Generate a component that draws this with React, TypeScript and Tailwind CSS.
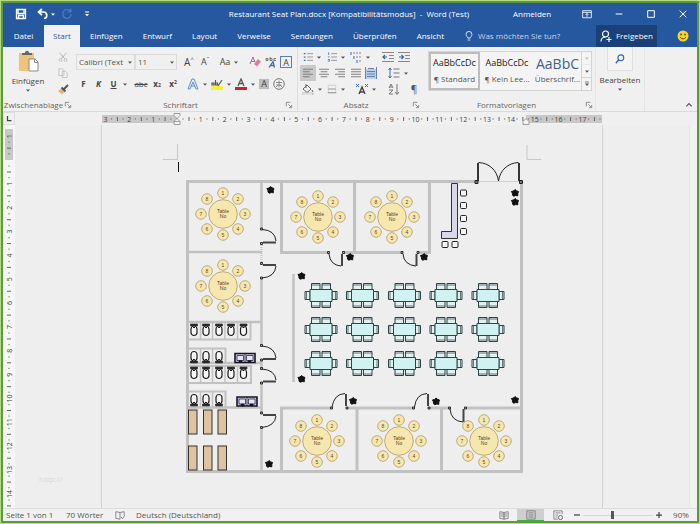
import type { ReactNode } from "react";

const tabs = ["Einfügen", "Entwurf", "Layout", "Verweise", "Sendungen", "Überprüfen", "Ansicht"];

const roundTables = [
  [223, 214],
  [223, 286],
  [318, 217],
  [392, 217],
  [317, 441],
  [399, 441],
  [484, 441],
];

const seats = [
  [0, -21],
  [15, -15],
  [22, 0],
  [15, 15],
  [0, 21],
  [-16, 15],
  [-22, 0],
  [-16, -15],
];

const plants = [
  [270.5, 190],
  [350, 257],
  [424, 257],
  [301.5, 276],
  [301.5, 379],
  [269, 464],
  [515, 193],
  [515, 202],
  [515, 400],
  [353, 401],
  [436, 401.5],
];

const doors = [
  { posts: [261.5, 229, 261.5, 243.5], leaf: "M263 242.5H276", arc: "M262 229.5Q275 230 276 241" },
  { posts: [261.5, 263.5, 261.5, 278], leaf: "M263 265H276", arc: "M262 278Q275 277 276 266" },
  { posts: [261.5, 345.5, 261.5, 360], leaf: "M263 359H276", arc: "M262 346Q275 347 276 358" },
  { posts: [261.5, 368.5, 261.5, 383], leaf: "M263 381.5H276", arc: "M262 369Q275 370 276 380" },
  { posts: [261.5, 413, 261.5, 427.5], leaf: "M263 415H276", arc: "M262 427.5Q275 426 276 416" },
  { posts: [328.5, 252.5, 343.5, 252.5], leaf: "M342 254V266", arc: "M329 254Q330 265 341 266" },
  { posts: [402, 252.5, 418, 252.5], leaf: "M416.5 254V266", arc: "M403 254Q404 265 416 266" },
  { posts: [331.5, 408, 347, 408], leaf: "M346 406V394", arc: "M332 407Q334 394 345 393.5" },
  { posts: [413.5, 408, 429, 408], leaf: "M428 406V394", arc: "M414.5 407Q416 394 427 393.5" },
  { posts: [449.5, 408, 465.5, 408], leaf: "M463.5 409V422", arc: "M450 409Q451 421 463 422" },
];

const stools = [
  [463.5, 193],
  [463.5, 205.5],
  [463.5, 218.5],
  [463.5, 231.5],
  [445, 244.5],
  [455, 244.5],
];

function Caret() {
  return (
    <svg viewBox="0 0 4 3" className="h-[3px] w-1 shrink-0 fill-[#555]" aria-hidden="true">
      <path d="M0 .5h4L2 2.7z" />
    </svg>
  );
}

function Icon({ children, className = "size-3" }: { children: ReactNode; className?: string }) {
  return (
    <svg viewBox="0 0 12 12" fill="none" className={`shrink-0 ${className}`} aria-hidden="true">
      {children}
    </svg>
  );
}

function Tool({ label, className, children }: { label: string; className: string; children: ReactNode }) {
  return (
    <button aria-label={label} className={`flex shrink-0 items-center justify-center ${className}`}>
      {children}
    </button>
  );
}

function GroupLabel({ children }: { children: ReactNode }) {
  return (
    <div className="flex h-3 items-center text-[#666]">
      <span className="flex-1 text-center">{children}</span>
      <Icon className="size-2">
        <path d="M2 8V2h6M5 5l4 4M10 6v4H6" stroke="#777" strokeWidth="1.2" />
      </Icon>
    </div>
  );
}

function TitleBar() {
  return (
    <div className="flex h-[22px] items-center bg-[#2658a0] text-white">
      <div className="flex w-[198px] items-center pl-3">
        <Tool label="Speichern" className="w-3">
          <Icon>
            <path d="M1.5 1.5h9v9h-9zM3 1.5v4h6v-4M3.5 10.5v-3h5v3" stroke="#fff" strokeWidth="1.3" />
          </Icon>
        </Tool>
        <Tool label="Rückgängig" className="ml-2.5 w-3">
          <Icon>
            <path d="M5 1L1.5 4 5 7.2M2 4h4.5c4 0 4.5 6 .5 6.5" stroke="#fff" strokeWidth="1.7" />
          </Icon>
        </Tool>
        <Tool label="Rückgängig Liste" className="w-2">
          <svg viewBox="0 0 4 3" className="h-[3px] w-1 fill-white"><path d="M0 .5h4L2 2.7z" /></svg>
        </Tool>
        <Tool label="Wiederholen" className="ml-1 w-3">
          <Icon>
            <path d="M9.5 3.5A4.3 4.3 0 1 0 10.300 6M9.8.8v3H6.8" stroke="#4f79b8" strokeWidth="1.3" />
          </Icon>
        </Tool>
        <Tool label="Symbolleiste anpassen" className="ml-2 w-3">
          <Icon className="size-2">
            <path d="M3 3h6" stroke="#fff" strokeWidth="1.5" />
            <path d="M3 6h6L6 9.5z" fill="#fff" />
          </Icon>
        </Tool>
      </div>
      <h1 className="flex-1 text-center whitespace-nowrap">
        Restaurant Seat Plan.docx [Kompatibilitätsmodus] &nbsp;-&nbsp; Word (Test)
      </h1>
      <div className="flex w-[200px] items-center justify-between pr-2">
        <button className="ml-4">Anmelden</button>
        <div className="flex gap-5">
          <Tool label="Menüband-Anzeigeoptionen" className="w-3">
            <Icon className="size-2.5">
              <path d="M.8 2h10.400v8.500H.8zM.8 4h10.400M6 9.5V5.5M4.300 7L6 5.300 7.700 7" stroke="#fff" />
            </Icon>
          </Tool>
          <Tool label="Minimieren" className="w-3">
            <Icon className="size-2"><path d="M1 6h10" stroke="#fff" strokeWidth="1.5" /></Icon>
          </Tool>
          <Tool label="Maximieren" className="w-3">
            <Icon className="size-2"><path d="M1 1h10v10H1z" stroke="#fff" strokeWidth="1.5" /></Icon>
          </Tool>
          <Tool label="Schließen" className="w-3">
            <Icon className="size-2"><path d="M1 1l10 10M11 1L1 11" stroke="#fff" strokeWidth="1.5" /></Icon>
          </Tool>
        </div>
      </div>
    </div>
  );
}

function TabBar() {
  return (
    <nav className="flex h-[22px] items-center bg-[#2658a0] text-white">
      <button className="w-[41px]">Datei</button>
      <button className="h-full w-9 bg-[#f1f1f1] text-[#2a579a]">Start</button>
      <div className="ml-2.5 flex gap-5">
        {tabs.map((tab) => (
          <button key={tab}>{tab}</button>
        ))}
      </div>
      <label className="ml-5 flex flex-1 items-center">
        <Icon className="size-2.5">
          <path d="M4.5 8.5C4.5 7 2.5 6.5 2.5 4a3.5 3.5 0 0 1 7 0c0 2.5-2 3-2 4.500zM4.5 10.800h3" stroke="#d5e1f2" strokeWidth="1.2" />
        </Icon>
        <input
          aria-label="Was möchten Sie tun?"
          placeholder="Was möchten Sie tun?"
          className="ml-1 w-24 bg-transparent outline-none placeholder:text-[#c5d5ec]"
        />
      </label>
      <button className="flex h-full w-[61px] items-center justify-center gap-1 bg-[#1a4078]">
        <Icon className="size-3">
          <circle cx="5.5" cy="4" r="3" stroke="#fff" strokeWidth="1.2" />
          <path d="M1 11.5c0-3 2-4.500 4.5-4.500M6.5 9.5h5M9 7v5" stroke="#fff" strokeWidth="1.2" />
        </Icon>
        Freigeben
      </button>
      <Tool label="Feedback" className="mr-2 ml-5 w-3">
        <Icon>
          <circle cx="6" cy="6" r="5.5" fill="#fbd324" />
          <circle cx="4" cy="4.5" r=".9" fill="#5b4a10" />
          <circle cx="8" cy="4.5" r=".9" fill="#5b4a10" />
          <path d="M3 7.2Q6 10.500 9 7.2" stroke="#5b4a10" />
        </Icon>
      </Tool>
    </nav>
  );
}

function Clipboard() {
  return (
    <section className="flex w-[73px] flex-col">
      <div className="flex flex-1 gap-1 pt-0.5">
        <button className="flex w-[50px] flex-col items-center pt-px">
          <svg viewBox="0 0 22 22" className="size-[22px]" aria-hidden="true">
            <path d="M2 3h15v18H2z" fill="#efc47a" />
            <path d="M5 5V3h3c0-3 4-3 4 0h3v2z" fill="#666" />
            <path d="M12 9h6l3 3v9h-9z" fill="#fff" stroke="#8a8a8a" />
            <path d="M17.5 9v3.5H21" fill="none" stroke="#8a8a8a" />
          </svg>
          <span className="mt-1">Einfügen</span>
          <span className="flex h-2 items-center"><Caret /></span>
        </button>
        <div className="flex flex-col gap-1 pt-0.5">
          <Tool label="Ausschneiden" className="h-3 w-3">
            <Icon className="size-2.5">
              <path d="M2 1l6 7M10 1L4 8" stroke="#aaa" />
              <circle cx="3" cy="9.5" r="1.7" stroke="#bbb" />
              <circle cx="9" cy="9.5" r="1.7" stroke="#bbb" />
            </Icon>
          </Tool>
          <Tool label="Kopieren" className="h-3 w-3">
            <Icon className="size-2.5"><path d="M1 1h4l2 2v6H1zM5 4h4l2 2v5.500H5z" stroke="#bdbdbd" /></Icon>
          </Tool>
          <Tool label="Format übertragen" className="h-3 w-3">
            <Icon>
              <path d="M1 8l4-3 3 3-3 3.500z" fill="#eab676" />
              <path d="M4.5 4.5l4 4M7 6l4-4" stroke="#555" strokeWidth="2" />
            </Icon>
          </Tool>
        </div>
      </div>
      <div className="pr-1">
        <GroupLabel>Zwischenablage</GroupLabel>
      </div>
    </section>
  );
}

function FontGroup() {
  return (
    <section className="flex w-[222px] flex-col border-r border-[#dedede] pr-1">
      <div className="flex-1 pt-1.5">
        <div className="flex h-[18px] items-center">
          <label className="flex h-4 w-[59px] items-center border border-[#dcdcdc] px-0.5 text-[#555]">
            <select aria-label="Schriftart" className="min-w-0 flex-1 appearance-none bg-transparent outline-none">
              <option>Calibri (Text</option>
            </select>
            <Caret />
          </label>
          <label className="flex h-4 w-[42px] items-center border border-[#dcdcdc] px-0.5 text-[#555]">
            <select aria-label="Schriftgrad" className="min-w-0 flex-1 appearance-none bg-transparent outline-none">
              <option>11</option>
            </select>
            <Caret />
          </label>
          <Tool label="Vergrößern" className="ml-1 w-4 text-[10px]">A<sup className="text-[6px]">^</sup></Tool>
          <Tool label="Verkleinern" className="w-4 text-[9px]">A<sup className="text-[6px]">ˇ</sup></Tool>
          <Tool label="Groß/Klein" className="ml-1 w-6 gap-1 text-[9px]">Aa<Caret /></Tool>
          <Tool label="Formatierung löschen" className="ml-1.5 w-4">
            <Icon>
              <path d="M5 8l4-5 3 2.500-4 5z" fill="#df7c9a" />
              <path d="M1 8L4 1l2 5M2.5 5.5h3" stroke="#a56a90" />
            </Icon>
          </Tool>
          <Tool label="Phonetische Zeichen" className="w-4">
            <Icon>
              <path d="M1 2.5h2v2H1zM5 1v3.500h2v-2H5M11 2.5H9v2h2" stroke="#666" strokeWidth=".9" />
              <path d="M4 11.5L8 5.5l1.500 6M5.5 9.5h3.500" stroke="#3e6db5" strokeWidth="1.3" />
            </Icon>
          </Tool>
          <Tool label="Zeichenrahmen" className="ml-px size-3 border border-[#5f7ea8] text-[9px] leading-none">A</Tool>
        </div>
        <div className="mt-1 flex h-[18px] items-center text-[#444]">
          <Tool label="Fett" className="w-[15px] font-bold">F</Tool>
          <Tool label="Kursiv" className="w-[15px] font-bold italic">K</Tool>
          <Tool label="Unterstrichen" className="w-[15px] font-bold underline">U</Tool>
          <Tool label="Unterstreichungsart" className="w-2"><Caret /></Tool>
          <Tool label="Durchgestrichen" className="ml-1 w-4 line-through">abc</Tool>
          <Tool label="Tiefgestellt" className="w-4 font-bold">x<sub className="text-[5px]">2</sub></Tool>
          <Tool label="Hochgestellt" className="w-4 font-bold">x<sup className="text-[5px]">2</sup></Tool>
          <Tool label="Texteffekte" className="ml-1.5 w-5 gap-1">
            <Icon><path d="M1 11L5 1h2l4 10H9L6 4 3 11zM4 8h4" stroke="#5b8fd0" /></Icon>
            <Caret />
          </Tool>
          <Tool label="Hervorhebung" className="ml-1 w-5 gap-1">
            <Icon>
              <path d="M0 8h12v4H0z" fill="#f4f03c" />
              <path d="M1 5h2v2H1zM4.5 2v5h2V5h-2M7 8l4-6" stroke="#555" strokeWidth="1.2" />
            </Icon>
            <Caret />
          </Tool>
          <Tool label="Schriftfarbe" className="ml-1 w-5 gap-1">
            <Icon>
              <path d="M0 9h12v3H0z" fill="#d3222a" />
              <path d="M3 8l3-7 3 7M4.2 5.5h3.600" stroke="#555" strokeWidth="1.3" />
            </Icon>
            <Caret />
          </Tool>
          <Tool label="Zeichenschattierung" className="ml-1 size-2.5 bg-[#bdbdbd] text-[9px]">A</Tool>
          <Tool label="Umkreisen" className="ml-1 w-3">
            <Icon>
              <circle cx="6" cy="6" r="5.3" stroke="#777" />
              <path d="M3 4.500h6M6 2.5V9.5M3.5 7h5M3 9l2-2M9 9L7 7" stroke="#777" strokeWidth=".8" />
            </Icon>
          </Tool>
        </div>
      </div>
      <GroupLabel>Schriftart</GroupLabel>
    </section>
  );
}

function Lines({ d }: { d: string }) {
  return (
    <Icon className="size-2.5">
      <path d={d} stroke="#777" strokeWidth="1.1" />
    </Icon>
  );
}

function ParagraphGroup() {
  return (
    <section className="flex w-[126px] flex-col pr-1 pl-0.5">
      <div className="flex-1 pt-0.5">
        <div className="flex h-4 items-center">
          <Tool label="Aufzählung" className="w-6 gap-1">
            <Icon className="size-2.5"><path d="M1 2h2M1 6h2M1 10h2" stroke="#3e6db5" strokeWidth="1.5" /><path d="M5 2h7M5 6h7M5 10h7" stroke="#888" /></Icon>
            <Caret />
          </Tool>
          <Tool label="Nummerierung" className="w-6 gap-1">
            <Icon className="size-2.5"><path d="M2 .5v3M1 6h2M1 9h2v2H1" stroke="#3e6db5" /><path d="M5 2h7M5 6h7M5 10h7" stroke="#888" /></Icon>
            <Caret />
          </Tool>
          <Tool label="Liste mit mehreren Ebenen" className="w-6 gap-1">
            <Icon><path d="M1 1v3M4 5v3M7 9v3" stroke="#3e6db5" /><path d="M3 2h8M6 6h6M9 10h3" stroke="#888" strokeDasharray="2 1" /></Icon>
            <Caret />
          </Tool>
          <Tool label="Einzug verkleinern" className="ml-2 w-4">
            <Icon><path d="M0 1.5h12M7 4.5h5M7 7.5h5M0 10.5h12" stroke="#888" /><path d="M5 6H1M3 4L1 6l2 2" stroke="#2f65b0" strokeWidth="1.2" /></Icon>
          </Tool>
          <Tool label="Einzug vergrößern" className="w-4">
            <Icon><path d="M0 1.5h12M7 4.5h5M7 7.5h5M0 10.5h12" stroke="#888" /><path d="M1 6h4M3.5 4l2 2-2 2" stroke="#2f65b0" strokeWidth="1.2" /></Icon>
          </Tool>
        </div>
        <div className="flex h-4 items-center">
          <Tool label="Linksbündig" className="size-4 bg-[#c9c9c9]"><Lines d="M0 1.500h12M0 4.500h8M0 7.500h12M0 10.500h8" /></Tool>
          <Tool label="Zentriert" className="w-4"><Lines d="M0 1.500h12M2 4.500h8M0 7.500h12M2 10.500h8" /></Tool>
          <Tool label="Rechtsbündig" className="w-4"><Lines d="M0 1.500h12M4 4.500h8M0 7.500h12M4 10.500h8" /></Tool>
          <Tool label="Blocksatz" className="w-4"><Lines d="M0 1.500h12M0 4.500h12M0 7.500h12M0 10.500h12" /></Tool>
          <Tool label="Verteilt" className="w-3.5">
            <Icon>
              <path d="M0 2h12v10H0z" fill="#b9d0ec" />
              <path d="M.5 0v12M11.5 0v12M2 4.5h8M2 7h8M2 9.5h8M3 1.5h6" stroke="#6580a6" />
            </Icon>
          </Tool>
          <Tool label="Zeilenabstand" className="ml-2 w-6 gap-1">
            <Icon><path d="M2 1v10M.5 3L2 1l1.500 2M.5 9L2 11l1.500-2" stroke="#3e6db5" /><path d="M5.500 2h6M5.500 6h6M5.500 10h6" stroke="#777" /></Icon>
            <Caret />
          </Tool>
        </div>
        <div className="flex h-4 items-center">
          <Tool label="Schattierung" className="w-6 gap-1">
            <Icon>
              <path d="M1 6l4-4 4 4-4 3.500zM4 1v4M10 7l1 2" stroke="#666" />
              <path d="M0 10h11v2H0z" fill="#fff" stroke="#999" strokeWidth=".6" />
            </Icon>
            <Caret />
          </Tool>
          <Tool label="Rahmen" className="w-6 gap-1">
            <Icon className="size-2.5"><path d="M1.500 1.500h9v9h-9z" stroke="#ccc" /><path d="M1.500 6h9M1 10.500h10" stroke="#888" /></Icon>
            <Caret />
          </Tool>
          <Tool label="Asiatisches Layout" className="ml-1.5 w-6 gap-1">
            <Icon><path d="M3 11l3-7 3 7M4 9h4" stroke="#444" strokeWidth="1.4" /><path d="M0 1l3 3M3 1L0 4M12 1L9 4M9 1l3 3" stroke="#3e6db5" /></Icon>
            <Caret />
          </Tool>
          <Tool label="Sortieren" className="ml-1.5 w-5">
            <Icon><path d="M1 5l2-4 2 4M2 4h2M1 7h4l-4 4h4M9 1v10M7 9l2 2.500L11 9" stroke="#777" /></Icon>
          </Tool>
          <Tool label="Formatierungszeichen" className="w-5 text-[10px] text-[#555]">¶</Tool>
        </div>
      </div>
      <GroupLabel>Absatz</GroupLabel>
    </section>
  );
}

function StylesGroup() {
  return (
    <section className="flex w-[171px] flex-col pr-0.5 pl-1">
      <div className="flex-1 pt-1">
        <div className="flex h-10 w-[164px] border border-[#d4d4d4] bg-[#f4f4f4] text-[#555]">
          <button className="flex w-[51px] flex-col items-center justify-center gap-1.5 border-2 border-[#bdbdbd] whitespace-nowrap">
            <span className="text-[9px] text-[#222]">AaBbCcDc</span>
            <span>¶ Standard</span>
          </button>
          <button className="ml-1 flex w-[46px] flex-col items-center justify-center gap-1.5 whitespace-nowrap">
            <span className="text-[9px] text-[#222]">AaBbCcDc</span>
            <span>¶ Kein Lee...</span>
          </button>
          <button className="ml-1 flex flex-1 flex-col items-center justify-center gap-1 whitespace-nowrap">
            <span className="text-[14px] leading-3 text-[#3f6286]">AaBbC</span>
            <span>Überschrif...</span>
          </button>
          <div className="flex w-2.5 flex-col border-l border-[#d4d4d4]">
            <Tool label="Nach oben" className="flex-1 border-b border-[#d4d4d4] opacity-30"><Caret /></Tool>
            <Tool label="Nach unten" className="flex-1 border-b border-[#d4d4d4]"><Caret /></Tool>
            <Tool label="Weitere" className="flex-1">
              <Icon className="size-1.5"><path d="M2 2h8" stroke="#555" strokeWidth="1.5" /><path d="M2 5h8L6 10z" fill="#555" /></Icon>
            </Tool>
          </div>
        </div>
      </div>
      <GroupLabel>Formatvorlagen</GroupLabel>
    </section>
  );
}

function Ribbon() {
  return (
    <div className="flex h-[65px] border-b border-[#dadada] bg-[#f0f0f0] text-[#444]">
      <Clipboard />
      <FontGroup />
      <ParagraphGroup />
      <StylesGroup />
      <section className="flex w-[50px] flex-col items-center border-x border-[#e6e6e6]">
        <button className="flex flex-col items-center">
          <span className="flex h-6 w-[26px] items-center justify-center border border-t-0 border-[#e0e0e0] bg-[#f4f4f4]">
            <Icon className="size-2.5">
              <circle cx="7" cy="4.5" r="3.5" stroke="#2f65b0" strokeWidth="1.3" />
              <path d="M4.5 7L1 11" stroke="#2f65b0" strokeWidth="1.7" />
            </Icon>
          </span>
          <span className="mt-1">Bearbeiten</span>
          <span className="flex h-2 items-center"><Caret /></span>
        </button>
      </section>
      <div className="flex flex-1 items-end justify-end pr-1 pb-0.5">
        <Tool label="Menüband reduzieren" className="w-2">
          <Icon className="size-2"><path d="M2 8l4-4 4 4" stroke="#555" strokeWidth="1.8" /></Icon>
        </Tool>
      </div>
    </div>
  );
}

// One centimetre on the ruler at 90 %
const CM = 23.85;

function HorizontalRuler() {
  const marks = Array.from({ length: 21 }, (_, i) => i - 3);
  return (
    <div className="flex h-[13px] bg-[#f0f0f0]">
      <div className="flex w-3 items-center justify-center border border-[#dcdcdc]">
        <Icon className="size-1.5"><path d="M3 0v9h8" stroke="#444" strokeWidth="2.5" /></Icon>
      </div>
      <div className="flex flex-1 justify-center">
        <svg viewBox="101 112 502 13" className="h-[13px] w-[502px]" aria-label="Lineal">
          <path d="M102 115h75v8h-75zM526 115h76v8h-76z" fill="#c8c8c8" />
          {marks.map((n) => {
            const x = 177 + n * CM;
            return (
              <g key={n}>
                {n !== 0 && (
                  <text x={x} y="121.5" textAnchor="middle" fontSize="7" fill="#444">{Math.abs(n)}</text>
                )}
                <path
                  d={`M${x + 5.5} 119h1.2M${x + 17} 119h1.2M${x + 12} 117v4`}
                  stroke="#666"
                />
              </g>
            );
          })}
          <path d="M174 113.5h6v2l-3 3-3-3zM174 121.5l3-3 3 3v3h-6zM174 121.5h6" fill="#f4f4f4" stroke="#888" strokeWidth=".8" />
          <path d="M523 124.5v-3l3-3 3 3v3z" fill="#f4f4f4" stroke="#888" strokeWidth=".8" />
        </svg>
      </div>
      <div className="w-2" />
    </div>
  );
}

function VerticalRuler() {
  const marks = Array.from({ length: 16 }, (_, i) => i - 1);
  return (
    <svg viewBox="3 125 12 383" className="h-[383px] w-3 shrink-0 bg-[#f6f6f6]" aria-label="Vertikales Lineal">
      <path d="M5 129h8v31H5z" fill="#c8c8c8" />
      {marks.map((n) => {
        const y = 160 + n * CM;
        return (
          <g key={n}>
            {n !== 0 && (
              <text transform={`translate(11.5 ${y}) rotate(-90)`} textAnchor="middle" fontSize="7" fill="#444">
                {Math.abs(n)}
              </text>
            )}
            <path d={`M9 ${y + 5.5}v1.2M9 ${y + 17}v1.2M7 ${y + 12}h4`} stroke="#666" />
          </g>
        );
      })}
    </svg>
  );
}

function RoundTable({ x, y }: { x: number; y: number }) {
  return (
    <g transform={`translate(${x} ${y})`}>
      <g fill="#f6e7ae" stroke="#b39a62" strokeWidth=".8">
        <circle r="14.3" />
        {seats.map(([sx, sy]) => (
          <circle key={`${sx},${sy}`} cx={sx} cy={sy} r="5.3" />
        ))}
      </g>
      <g textAnchor="middle" fontSize="5" fill="#5a4526">
        <text y="-1">Table</text>
        <text y="4">No</text>
        {seats.map(([sx, sy], i) => (
          <text key={i} x={sx} y={sy + 1.8}>{i + 1}</text>
        ))}
      </g>
    </g>
  );
}

function DiningTable({ x, y }: { x: number; y: number }) {
  return (
    <g transform={`translate(${x} ${y})`} stroke="#2b4447" strokeWidth="1">
      <path d="M-9.500-12h8.500v6h-8.500zM1-12h8.500v6H1zM-9.500 6h8.500v6h-8.500zM1 6h8.500v6H1zM-16-4h5v8h-5zM11-4h5v8h-5z" fill="#e3f0f0" />
      <path d="M-9.500-10.500h8.500M1-10.500h8.500M-9.500 10.500h8.500M1 10.500h8.500M-14.500-4v8M14.500-4v8" strokeWidth=".7" />
      <path d="M-11-6h22V6h-22z" fill="#d0f2f1" />
    </g>
  );
}

function Toilet({ x, y, flip = false }: { x: number; y: number; flip?: boolean }) {
  return (
    <g transform={`translate(${x} ${y}) scale(1 ${flip ? -1 : 1})`} stroke="#1c1c1c">
      <path d="M-3.500-6h7v2h-7z" fill="#333" strokeWidth=".6" />
      <rect x="-3" y="-4" width="6" height="9.5" rx="3" fill="#f6f6f6" strokeWidth="1.2" />
      <path d="M-1 -2.500h2" strokeWidth="1" />
    </g>
  );
}

function Sinks({ x, y }: { x: number; y: number }) {
  return (
    <g transform={`translate(${x} ${y})`} stroke="#15152a">
      <path d="M1 1h20v9H1z" fill="#c9c9de" strokeWidth="1.6" />
      <path d="M11 1v9M3 8V3h6.500v5zM12.500 8V3H19v5z" fill="#e6e6f0" strokeWidth=".7" />
      <path d="M5 8h3v2H5zM14 8h3v2h-3z" fill="#15152a" strokeWidth=".6" />
    </g>
  );
}

function FloorPlan() {
  return (
    <svg
      viewBox="102 125 500 383"
      fill="none"
      fontFamily="Liberation Sans, Arial, sans-serif"
      className="h-[383px] w-[500px]"
      role="img"
      aria-label="Restaurant Seat Plan"
    >
      <path d="M163 159.5h14.500V144M541 159.5h-14V145" stroke="#c6c6c6" />
      <path d="M178.5 162v10" stroke="#111" />

      {/* Walls */}
      <g stroke="#c1c1c1" strokeWidth="3">
        <path d="M476 181.5H187.5V471.5H521.5V181" />
        <path d="M261.5 183V228M261.5 279V345M261.5 361V368M261.5 384V413M261.5 428V470M187 252H262M187 322H262M187 363H262M187 407.5H262" strokeWidth="2.5" />
        <path d="M261.5 245V263" strokeDasharray="1 1" strokeWidth="2" />
        <path d="M281.5 183V252.5H328M344 252.5H401M419 252.5H429.5V183M354.5 183V252" />
        <path d="M293.5 274V382" strokeWidth="2.5" />
        <path d="M281.5 470V408H331M348 408H413M430 408H449M466 408H520M357 408V470M441.5 408V470" />
        <path d="M188 339.5H250.5V323M188 366H251V383H188M188 348.5H225.5V362M188 391.5H225.5V407" strokeWidth="2" />
        <path d="M200.5 323v17M212.5 323v17M225 323v17M237.5 323v17M200.5 348v14M212.5 348v14M200.5 366v17M212.5 366v17M225 366v17M237.5 366v17M200.5 391v16M212.5 391v16" strokeWidth="1.5" />
      </g>
      <path d="M478 181.5h42" stroke="#c8c8c8" strokeWidth=".8" />

      {/* Entrance */}
      <g stroke="#222">
        <path d="M478 163v18M519 163v18" strokeWidth="1.8" />
        <path d="M478.5 162.5C489 163 497 170 498.5 181C500 170 508 163 518.5 162.5" />
        <path d="M475 180.5h3v3h-3zM519.5 180.5h3v3h-3z" fill="#777" />
      </g>

      {doors.map(({ posts, leaf, arc }) => (
        <g key={leaf} stroke="#222">
          <path d={leaf} stroke="#444" strokeWidth="2" />
          <path d={arc} />
          <path
            d={`M${posts[0] - 1} ${posts[1] - 1}h2v2h-2zM${posts[2] - 1} ${posts[3] - 1}h2v2h-2z`}
            fill="#aaa"
            strokeWidth=".9"
          />
        </g>
      ))}

      {roundTables.map(([x, y]) => (
        <RoundTable key={`${x},${y}`} x={x} y={y} />
      ))}

      {[295.5, 329.5, 363.5].map((y) =>
        [321, 362.5, 404.5, 446, 488].map((x) => <DiningTable key={`${x},${y}`} x={x} y={y} />)
      )}

      {plants.map(([x, y]) => (
        <path
          key={`${x},${y}`}
          transform={`translate(${x} ${y})`}
          d="M0-3.500L1.500-2.200 3.500-1.500 2.800.5 2.800 2.800.8 2.500-1.200 3.200-2.500 2.200-2.600.2-3.600-1.500-1.500-2z"
          fill="#111"
          stroke="#111"
          strokeLinejoin="round"
        />
      ))}

      {/* Bar with stools */}
      <path d="M451.5 183.5h6v55h-16v-7h10z" fill="#d9d8ea" stroke="#333" />
      {stools.map(([x, y]) => (
        <rect key={`${x},${y}`} x={x - 3} y={y - 3} width="6" height="6" rx="1" fill="#f4f4f4" stroke="#222" />
      ))}

      {/* Restrooms */}
      {[194, 206, 219, 231, 243.5].map((x) => (
        <g key={x}>
          <Toilet x={x} y={330} />
          <Toilet x={x} y={373} />
        </g>
      ))}
      {[194, 206, 219].map((x) => (
        <g key={x}>
          <Toilet x={x} y={357} flip />
          <Toilet x={x} y={400} flip />
        </g>
      ))}
      <Sinks x={234} y={352.5} />
      <Sinks x={236} y={396} />

      {/* Benches */}
      {[410, 446].map((y) =>
        [188.5, 203.5, 218].map((x) => (
          <rect key={`${x},${y}`} x={x} y={y} width="8.5" height="24" fill="#dfc3a0" stroke="#333" />
        ))
      )}
    </svg>
  );
}

function StatusBar() {
  return (
    <footer className="flex h-[13px] items-center border-t border-[#dcdcdc] bg-[#f1f1f1] pl-[3px] text-[#555]">
      <span className="w-[60px] whitespace-nowrap">Seite 1 von 1</span>
      <span className="w-[48px] whitespace-nowrap">70 Wörter</span>
      <Tool label="Rechtschreibprüfung" className="w-3">
        <Icon className="size-2.5"><path d="M1 2l5 1v8l-5-1zM6 3l5-1v4M7 8l2 2.500L12 6" stroke="#777" /></Icon>
      </Tool>
      <span className="ml-2.5 flex-1 whitespace-nowrap">Deutsch (Deutschland)</span>
      <Tool label="Lesemodus" className="w-[27px]">
        <Icon className="size-2.5"><path d="M1 2l5 1v8l-5-1zM11 2L6 3v8l5-1zM2 4.500l3 .5M2 7l3 .5M10 4.500L7 5M10 7l-3 .5" stroke="#777" /></Icon>
      </Tool>
      <Tool label="Seitenlayout" className="h-full w-[27px] border-b border-[#3fae49] bg-[#cfcfcf]">
        <Icon className="size-2.5"><path d="M1 1h10v10H1zM3 3.500h6M3 6h6M3 8.500h6" stroke="#777" /></Icon>
      </Tool>
      <Tool label="Weblayout" className="w-[27px]">
        <Icon className="size-2.5"><path d="M6 11H1V1h10v4M3 3.500h6M3 6h3M3 8.500h2" stroke="#777" /><circle cx="9" cy="9" r="2.5" stroke="#555" /></Icon>
      </Tool>
      <Tool label="Verkleinern" className="w-3">
        <Icon className="size-1.5"><path d="M0 6h12" stroke="#444" strokeWidth="2.5" /></Icon>
      </Tool>
      <input
        type="range"
        aria-label="Zoom"
        min="10"
        max="200"
        defaultValue="90"
        className="h-2 w-[70px] appearance-none bg-linear-to-b from-transparent from-45% via-[#aaa] via-50% to-transparent to-60% [&::-webkit-slider-thumb]:h-2 [&::-webkit-slider-thumb]:w-[3px] [&::-webkit-slider-thumb]:appearance-none [&::-webkit-slider-thumb]:bg-[#555]"
      />
      <Tool label="Vergrößern" className="w-3">
        <Icon className="size-1.5"><path d="M0 6h12M6 0v12" stroke="#444" strokeWidth="2.5" /></Icon>
      </Tool>
      <button className="w-8 text-center">90%</button>
    </footer>
  );
}

export default function App() {
  return (
    <div className="flex min-h-screen bg-[#b4dc88] p-px font-['Open_Sans','Noto_Sans',sans-serif] text-[8px] leading-[10px]">
      <div className="flex flex-1 flex-col border-2 border-[#5c9a3c] bg-[#eeeeee]">
        <TitleBar />
        <TabBar />
        <Ribbon />
        <HorizontalRuler />
        <main className="relative flex flex-1">
          <VerticalRuler />
          <div className="flex flex-1 justify-center">
            <div className="border-x border-[#d2d2d2]">
              <FloorPlan />
            </div>
          </div>
          <div className="w-2 border-l border-[#e6e6e6] bg-[#f1f4ec]" />
          <span className="absolute bottom-6 left-9 text-[#dadada]">http://</span>
        </main>
        <StatusBar />
      </div>
    </div>
  );
}
